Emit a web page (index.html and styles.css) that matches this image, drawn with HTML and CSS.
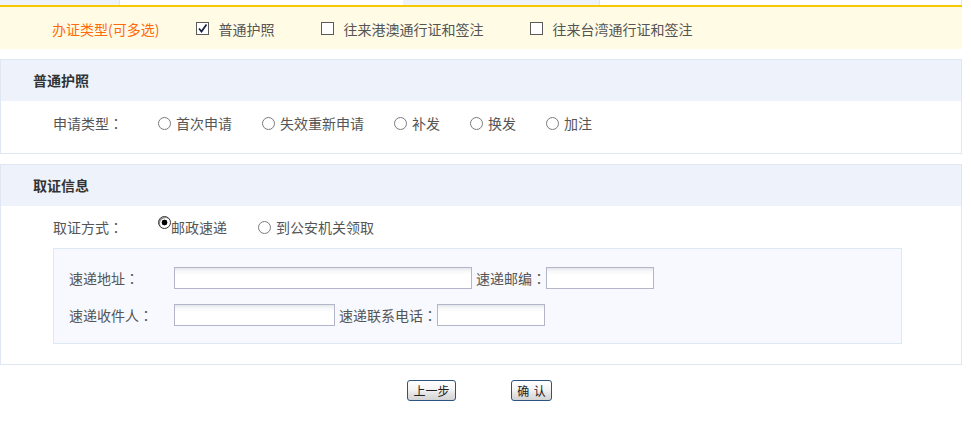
FILE: index.html
```html
<!DOCTYPE html>
<html lang="zh-CN">
<head>
<meta charset="utf-8">
<title>办证</title>
<link rel="stylesheet" href="styles.css">
</head>
<body>
<div class="page">
  <div class="tabs">
    <span class="tab tab-blue tab-a"></span>
    <span class="tab tab-white tab-b"></span>
    <span class="tab tab-blue tab-c"></span>
    <span class="tab tab-white tab-d"></span>
  </div>

  <div class="typebar">
    <span class="type-label">办证类型(可多选)</span>
    <span class="chk-opt"><span class="chk checked"><svg width="11" height="11" viewBox="0 0 11 11"><path d="M2 5.5 L4.5 8.5 L9.5 1.5" fill="none" stroke="#13213d" stroke-width="1.7"/></svg></span>普通护照</span>
    <span class="chk-opt"><span class="chk"></span>往来港澳通行证和签注</span>
    <span class="chk-opt"><span class="chk"></span>往来台湾通行证和签注</span>
  </div>

  <div class="section sec-one">
    <div class="sec-head">普通护照</div>
    <div class="sec-body body-one">
      <div class="row">
        <span class="row-label">申请类型<span class="colon" lang="zh-TW">：</span></span>
        <span class="opt"><span class="radio"></span>首次申请</span>
        <span class="opt"><span class="radio"></span>失效重新申请</span>
        <span class="opt"><span class="radio"></span>补发</span>
        <span class="opt"><span class="radio"></span>换发</span>
        <span class="opt"><span class="radio"></span>加注</span>
      </div>
    </div>
  </div>

  <div class="section sec-two">
    <div class="sec-head">取证信息</div>
    <div class="sec-body body-two">
      <div class="row">
        <span class="row-label">取证方式<span class="colon" lang="zh-TW">：</span></span>
        <span class="opt opt-tight"><span class="radio radio-on"></span>邮政速递</span>
        <span class="opt"><span class="radio"></span>到公安机关领取</span>
      </div>
      <div class="mailbox">
        <div class="field-row">
          <span class="f-label">速递地址<span class="colon" lang="zh-TW">：</span></span>
          <span class="input w-addr"></span>
          <span class="f-label-inline">速递邮编<span class="colon" lang="zh-TW">：</span></span>
          <span class="input w-short"></span>
        </div>
        <div class="field-row">
          <span class="f-label">速递收件人<span class="colon" lang="zh-TW">：</span></span>
          <span class="input w-name"></span>
          <span class="f-label-inline">速递联系电话<span class="colon" lang="zh-TW">：</span></span>
          <span class="input w-short"></span>
        </div>
      </div>
    </div>
  </div>

  <div class="actions">
    <button class="btn btn-prev">上一步</button>
    <button class="btn btn-ok">确 认</button>
  </div>
</div>
</body>
</html>
```

FILE: styles.css
```css
* {
  box-sizing: border-box;
}

body {
  margin: 0;
  background: #fff;
  font-family: "Noto Sans CJK SC", "Noto Sans", sans-serif;
  font-size: 14px;
  color: #555;
}

.page {
  width: 962px;
}

.colon {
  font-family: "Noto Sans CJK TC", "Noto Sans CJK SC", sans-serif;
}

/* top tab strip */
.tabs {
  display: flex;
  height: 5px;
}
.tab-blue {
  background: #eef3fb;
}
.tab-white {
  background: #fff;
}
.tab-a {
  width: 120px;
  border-right: 1px solid #dfe6f0;
}
.tab-b {
  width: 283px;
}
.tab-c {
  width: 197px;
  border-right: 1px solid #dfe6f0;
}
.tab-d {
  flex: 1;
  border-right: 1px solid #dfe6f0;
}

/* type bar */
.typebar {
  display: flex;
  align-items: center;
  height: 44px;
  padding: 1px 0 0 52px;
  border-top: 2px solid #f8c800;
  background: #fffbe5;
}
.type-label {
  color: #ff6a0a;
  margin-right: 37px;
  line-height: 22px;
}
.chk-opt {
  display: flex;
  align-items: center;
  line-height: 22px;
  margin-right: 47px;
}
.chk-opt:last-child {
  margin-right: 0;
}
.chk {
  display: flex;
  align-items: center;
  justify-content: center;
  width: 13px;
  height: 13px;
  border: 1px solid #5a5a5a;
  background: #fff;
  margin-right: 9px;
}

/* sections */
.section {
  border: 1px solid #dfe7f2;
}
.sec-one {
  margin-top: 10px;
}
.sec-two {
  margin-top: 10px;
}
.sec-head {
  height: 41px;
  line-height: 41px;
  padding-left: 32px;
  background: #eef3fb;
  color: #333;
  font-weight: bold;
}
.body-one {
  padding: 11px 0 19px 52px;
}
.body-two {
  padding: 10px 0 20px 52px;
}

.row {
  display: flex;
  align-items: center;
  height: 22px;
  line-height: 22px;
}
.row-label {
  width: 105px;
}
.opt {
  display: flex;
  align-items: center;
  margin-right: 30px;
}
.opt-tight {
  margin-right: 31px;
}
.radio {
  width: 13px;
  height: 13px;
  border-radius: 50%;
  border: 1px solid #7a7a7a;
  background: #fff;
  margin-right: 5px;
}
.radio-on {
  margin-right: 0;
  margin-top: -9px;
  border: 1px solid #333;
  background: radial-gradient(circle at 50% 50%, #000 0, #000 2.6px, #fff 3.2px);
  box-shadow: inset 1px 1px 0 #888;
}

/* mail box */
.mailbox {
  margin-top: 10px;
  width: 849px;
  height: 96px;
  padding: 18px 0 0 15px;
  border: 1px solid #dde8f5;
  background: #f7f9fe;
  display: flex;
  flex-direction: column;
  gap: 15px;
}
.field-row {
  display: flex;
  align-items: center;
  height: 22px;
  line-height: 22px;
}
.f-label {
  width: 105px;
}
.f-label-inline {
  margin-left: 4px;
}
.input {
  display: block;
  height: 22px;
  border: 1px solid #b3b5c8;
  background: linear-gradient(to bottom, #e4e7ea 0, #f6f7f8 3px, #fff 7px);
}
.w-addr {
  width: 298px;
}
.w-name {
  width: 161px;
}
.w-short {
  width: 108px;
}

/* buttons */
.actions {
  display: flex;
  justify-content: center;
  gap: 55px;
  margin-top: 15px;
  padding-right: 3px;
}
.btn {
  height: 21px;
  padding: 0;
  border: 1px solid #2e5380;
  border-radius: 3px;
  background: linear-gradient(to bottom, #ffffff 0, #f4f4f4 45%, #e2e2e2 70%, #d4d4d4 100%);
  font-family: "Noto Sans CJK SC", sans-serif;
  font-size: 12px;
  line-height: 19px;
  color: #222;
}
.btn-prev {
  width: 49px;
}
.btn-ok {
  width: 41px;
  word-spacing: 2px;
}
```
